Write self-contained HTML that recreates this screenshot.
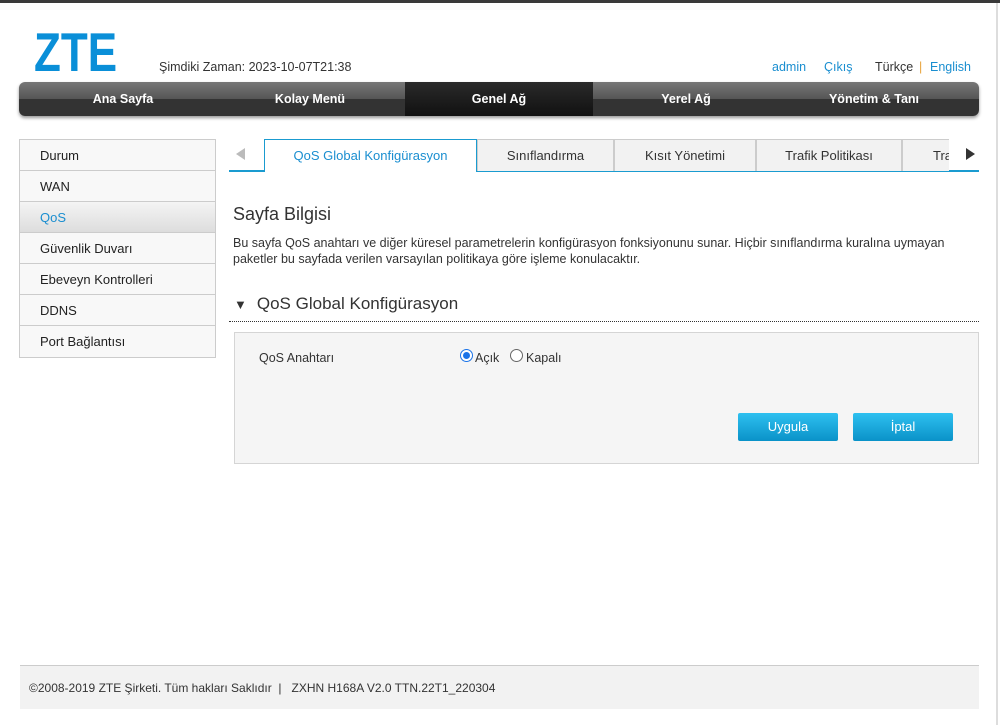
<!DOCTYPE html>
<html><head><meta charset="utf-8"><style>
*{margin:0;padding:0;box-sizing:border-box}
body{width:1000px;height:725px;background:#fff;font-family:"Liberation Sans",sans-serif;font-size:13px;color:#333;position:relative;overflow:hidden}
.abs{position:absolute}
.topbar{left:0;top:0;width:1000px;height:3px;background:#3a3a3a}
.rline{left:996px;top:3px;width:2px;height:722px;background:#ddd}
.logo{left:34px;top:25px;font-size:55px;font-weight:bold;color:#0a8fd8;line-height:55px;font-family:"Liberation Sans",sans-serif;transform:scaleX(0.8);transform-origin:left}
.time{left:159px;top:60px;font-size:12.5px;color:#333}
.links{top:60px;font-size:12.5px}
.nav{left:19px;top:82px;width:960px;height:34px;border-radius:6px;background:linear-gradient(#777 0,#555 50%,#333 50%,#333 100%);box-shadow:0 2px 3px #999;overflow:hidden}
.nav div{position:absolute;top:0;height:34px;line-height:35px;text-align:center;color:#fff;font-weight:bold;font-size:12.5px;width:188px}
.side{left:19px;top:139px;width:197px;border:1px solid #ccc}
.side div{height:31px;line-height:31px;padding-left:20px;border-bottom:1px solid #ccc;background:#f8f8f8;font-size:13px;color:#222}
.side div:last-child{border-bottom:none}
.side .act{background:linear-gradient(#f4f4f4,#ddd);color:#1a8ed0}
.tab{top:139px;height:32px;line-height:32px;text-align:center;background:#f2f2f2;border:1px solid #ccc;border-bottom:none;font-size:13px;color:#333}
</style></head><body>
<div class="abs topbar"></div>
<div class="abs rline"></div>
<div class="abs logo">ZTE</div>
<div class="abs time">Şimdiki Zaman: 2023-10-07T21:38</div>
<div class="abs links" style="left:772px;color:#1a8ed0">admin</div>
<div class="abs links" style="left:824px;color:#1a8ed0">Çıkış</div>
<div class="abs links" style="left:875px;color:#333">Türkçe</div>
<div class="abs links" style="left:919px;color:#e8a33a">|</div>
<div class="abs links" style="left:930px;color:#1a8ed0">English</div>
<div class="abs nav">
<div style="left:10px">Ana Sayfa</div>
<div style="left:197px">Kolay Menü</div>
<div style="left:386px;background:linear-gradient(#2a2a2a,#111);">Genel Ağ</div>
<div style="left:574px;width:186px">Yerel Ağ</div>
<div style="left:760px;width:190px">Yönetim &amp; Tanı</div>
</div>
<div class="abs side">
<div>Durum</div><div>WAN</div><div class="act">QoS</div><div>Güvenlik Duvarı</div><div>Ebeveyn Kontrolleri</div><div>DDNS</div><div>Port Bağlantısı</div>
</div>
<div class="abs" style="left:236px;top:148px;width:0;height:0;border-top:6px solid transparent;border-bottom:6px solid transparent;border-right:9px solid #bbb"></div>
<div class="abs" style="left:966px;top:148px;width:0;height:0;border-top:6px solid transparent;border-bottom:6px solid transparent;border-left:9px solid #333"></div>
<div class="abs" style="left:229px;top:170px;width:750px;height:2px;background:#1a9bd0"></div>
<div class="abs tab" style="left:264px;width:213px;background:#fff;border-color:#1a9bd0;height:33px;color:#1a8ed0">QoS Global Konfigürasyon</div>
<div class="abs tab" style="left:477px;width:137px">Sınıflandırma</div>
<div class="abs tab" style="left:614px;width:142px">Kısıt Yönetimi</div>
<div class="abs tab" style="left:756px;width:146px">Trafik Politikası</div>
<div class="abs tab" style="left:902px;width:47px;text-align:left;padding-left:30px;overflow:hidden;border-right:none">Trafik</div>
<div class="abs" style="left:233px;top:204px;font-size:18px;color:#333">Sayfa Bilgisi</div>
<div class="abs" style="left:233px;top:235px;width:750px;font-size:12.5px;line-height:16px;color:#333">Bu sayfa QoS anahtarı ve diğer küresel parametrelerin konfigürasyon fonksiyonunu sunar. Hiçbir sınıflandırma kuralına uymayan paketler bu sayfada verilen varsayılan politikaya göre işleme konulacaktır.</div>
<div class="abs" style="left:234px;top:294px;font-size:17px;color:#333"><span style="font-size:13px;margin-right:10px">▼</span>QoS Global Konfigürasyon</div>
<div class="abs" style="left:229px;top:321px;width:750px;border-top:1px dotted #333"></div>
<div class="abs" style="left:234px;top:332px;width:745px;height:132px;background:#f5f5f5;border:1px solid #d5d5d5"></div>
<div class="abs" style="left:259px;top:351px;font-size:12.5px">QoS Anahtarı</div>
<div class="abs" style="left:460px;top:349px;width:13px;height:13px;border-radius:50%;border:1px solid #1a73e8;background:#fff"><div style="margin:2px;width:7px;height:7px;border-radius:50%;background:#1a73e8"></div></div>
<div class="abs" style="left:475px;top:351px;font-size:12.5px">Açık</div>
<div class="abs" style="left:510px;top:349px;width:13px;height:13px;border-radius:50%;border:1px solid #666;background:#fff"></div>
<div class="abs" style="left:526px;top:351px;font-size:12.5px">Kapalı</div>
<div class="abs" style="left:738px;top:413px;width:100px;height:28px;line-height:28px;text-align:center;color:#fff;background:linear-gradient(#2ec0f0,#0a92c8);border-radius:2px;font-size:13px">Uygula</div>
<div class="abs" style="left:853px;top:413px;width:100px;height:28px;line-height:28px;text-align:center;color:#fff;background:linear-gradient(#2ec0f0,#0a92c8);border-radius:2px;font-size:13px">İptal</div>
<div class="abs" style="left:20px;top:665px;width:959px;height:44px;background:#f2f2f2;border-top:1px solid #ccc;line-height:44px;padding-left:9px;font-size:12px;color:#333">©2008-2019 ZTE Şirketi. Tüm hakları Saklıdır &nbsp;| &nbsp; ZXHN H168A V2.0 TTN.22T1_220304</div>
</body></html>
